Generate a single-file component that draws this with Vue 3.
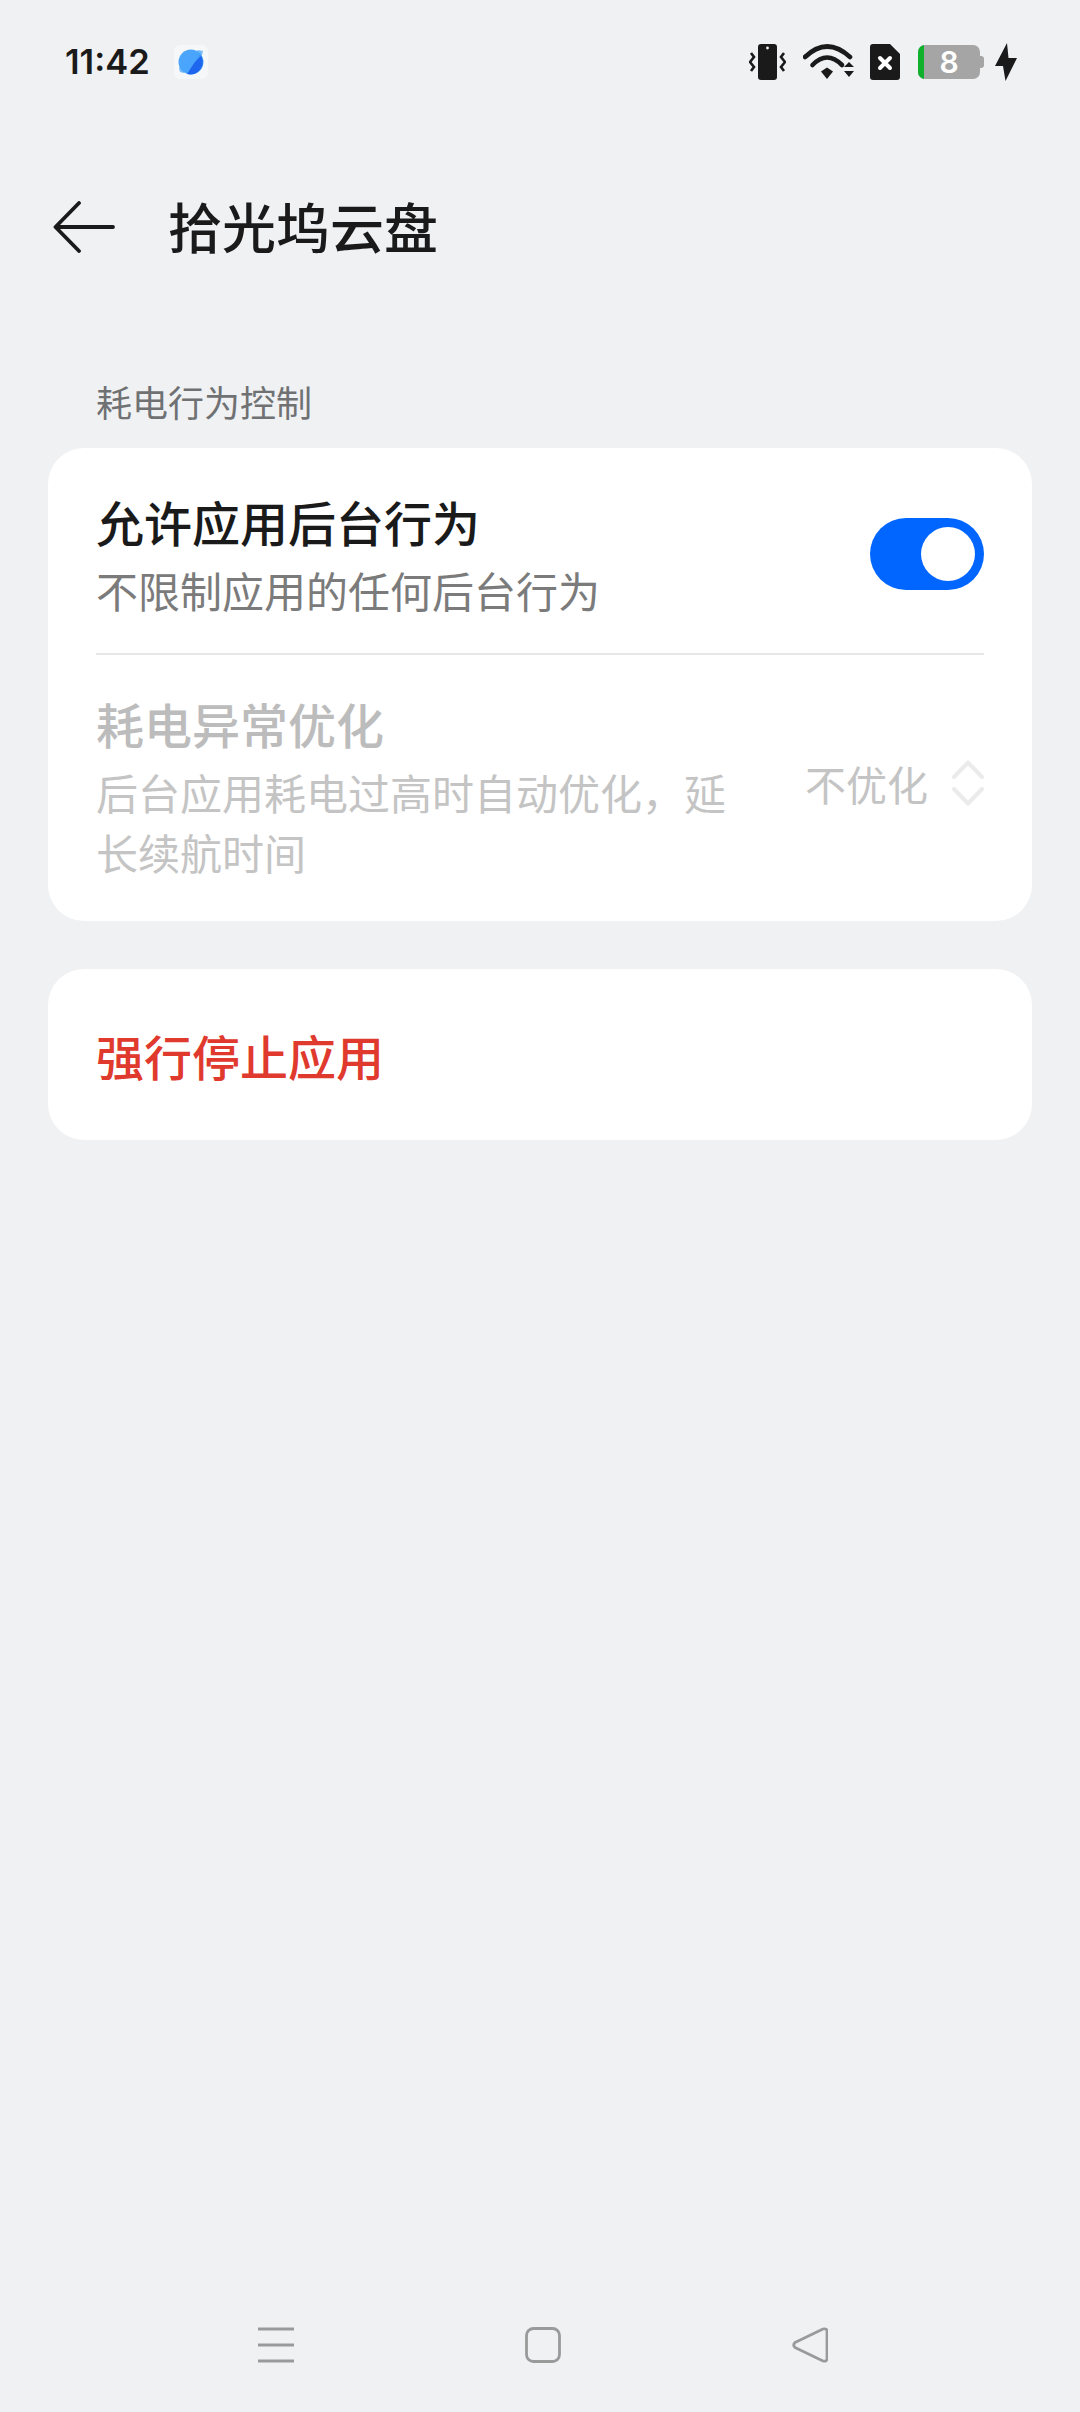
<template>
  <div class="page">
    <div class="status-bar">
      <div class="status-left">
        <span class="time">11:42</span>
        <svg class="app-icon" width="34" height="34" viewBox="0 0 34 34">
          <rect width="34" height="34" rx="6" fill="#f6f7f8" />
          <circle cx="17" cy="17" r="12.5" fill="#4aa5fb" />
          <path d="M26 9 A12.5 12.5 0 0 1 13 29 Z" fill="#1f66ee" />
          <path d="M6 27 L5 23 L24 5 L29 6 L28 10 L10 28 Z" fill="#4aa5fb" opacity="0.75" />
        </svg>
      </div>
      <div class="status-right">
        <svg width="37" height="36" viewBox="0 0 37 36">
          <rect x="9" y="0" width="19" height="36" rx="3" fill="#1a1a1a" />
          <circle cx="18.5" cy="4" r="1.4" fill="#f0f1f3" />
          <path d="M2 9 L5 13 L1 18 L5 23 L2 27" fill="none" stroke="#1a1a1a" stroke-width="2.6" />
          <path d="M35 9 L32 13 L36 18 L32 23 L35 27" fill="none" stroke="#1a1a1a" stroke-width="2.6" />
        </svg>
        <svg class="wifi" width="52" height="36" viewBox="0 0 52 36">
          <path d="M2 13 Q24 -8 47 13" fill="none" stroke="#1a1a1a" stroke-width="4.6" stroke-linecap="round" />
          <path d="M9.5 21 Q24 6 39 21" fill="none" stroke="#1a1a1a" stroke-width="4.6" stroke-linecap="round" />
          <path d="M18 27.5 L24 23.5 L30 27.5 L24 35 Z" fill="#1a1a1a" />
          <path d="M41 23 L46 18 L51 23 Z M41 27 L51 27 L46 33 Z" fill="#1a1a1a" />
        </svg>
        <svg class="sim" width="30" height="36" viewBox="0 0 30 36">
          <path d="M3 0 H20 L30 10 V33 A3 3 0 0 1 27 36 H3 A3 3 0 0 1 0 33 V3 A3 3 0 0 1 3 0 Z" fill="#1a1a1a" />
          <path d="M10 14 L20 24 M20 14 L10 24" stroke="#fff" stroke-width="4" stroke-linecap="round" />
        </svg>
        <div class="battery">
          <div class="battery-body">
            <span class="battery-level"></span>
            <span class="battery-num">8</span>
          </div>
          <span class="battery-cap"></span>
        </div>
        <svg class="bolt" width="22" height="38" viewBox="0 0 22 38">
          <path d="M12 0 L0 23 H8 L10.5 38 L22 15 H13.5 Z" fill="#1a1a1a" />
        </svg>
      </div>
    </div>

    <div class="header">
      <svg class="back" width="62" height="52" viewBox="0 0 62 52">
        <path d="M60 26 H3 M26 2 L2.5 26 L26 50" fill="none" stroke="#1a1a1a" stroke-width="3.8" stroke-linecap="round" stroke-linejoin="round" />
      </svg>
      <span class="title">拾光坞云盘</span>
    </div>

    <div class="section-title">耗电行为控制</div>

    <div class="card">
      <div class="row row-first">
        <div class="row-text">
          <div class="row-title">允许应用后台行为</div>
          <div class="row-sub">不限制应用的任何后台行为</div>
        </div>
        <div class="switch"><span class="knob"></span></div>
      </div>
      <div class="row row-disabled">
        <div class="row-text row-text-narrow">
          <div class="row-title">耗电异常优化</div>
          <div class="row-sub">后台应用耗电过高时自动优化，延长续航时间</div>
        </div>
        <div class="row-value">
          <span>不优化</span>
          <svg width="32" height="46" viewBox="0 0 32 46">
            <path d="M2 17 L16 2.5 L30 17 M2 29 L16 43.5 L30 29" fill="none" stroke="#ebebeb" stroke-width="4" stroke-linecap="round" stroke-linejoin="round" />
          </svg>
        </div>
      </div>
    </div>

    <div class="card card-stop">
      <span class="stop-text">强行停止应用</span>
    </div>

    <div class="nav-bar">
      <svg width="36" height="36" viewBox="0 0 36 36">
        <path d="M0 2 H36 M0 18 H36 M0 34 H36" stroke="#999b9b" stroke-width="3" />
      </svg>
      <svg width="36" height="36" viewBox="0 0 36 36">
        <rect x="1.5" y="1.5" width="33" height="33" rx="7" fill="none" stroke="#999b9b" stroke-width="2.8" />
      </svg>
      <svg width="36" height="36" viewBox="0 0 36 36">
        <path d="M31 2 Q35 1 35 4.5 V31.5 Q35 35 31 34 L3 20.5 Q0.5 18 3 15.5 Z" fill="none" stroke="#999b9b" stroke-width="2.8" stroke-linejoin="round" />
      </svg>
    </div>
  </div>
</template>

<script setup>
</script>

<style>
html, body {
  background: #f0f1f3;
}
</style>

<style scoped>
.page {
  display: flex;
  flex-direction: column;
  height: 2412px;
  box-sizing: border-box;
  background: #f0f1f3;
  color: #1a1a1a;
  font-family: "Noto Sans CJK SC", "Noto Sans", sans-serif;
  overflow: hidden;
}

/* 状态栏 */
.status-bar {
  display: flex;
  align-items: center;
  justify-content: space-between;
  height: 124px;
  padding: 0 63px 0 65px;
  flex-shrink: 0;
}
.status-left,
.status-right {
  display: flex;
  align-items: center;
}
.time {
  font-family: Inter, "Liberation Sans", sans-serif;
  font-size: 34.5px;
  font-weight: 600;
  line-height: 40px;
}
.app-icon {
  margin-left: 24px;
}
.wifi {
  margin-left: 17px;
}
.sim {
  margin-left: 15px;
}
.battery {
  display: flex;
  align-items: center;
  margin-left: 18px;
}
.battery-body {
  position: relative;
  width: 62px;
  height: 34px;
  border-radius: 7px;
  background: #a5a5a5;
  overflow: hidden;
  display: flex;
  align-items: center;
  justify-content: center;
}
.battery-level {
  position: absolute;
  left: 0;
  top: 0;
  bottom: 0;
  width: 6px;
  background: #0fb02b;
}
.battery-num {
  font-family: Inter, "Liberation Sans", sans-serif;
  font-size: 30px;
  font-weight: 600;
  color: #fff;
  line-height: 34px;
}
.battery-cap {
  width: 4px;
  height: 12px;
  background: #a5a5a5;
  border-radius: 0 3px 3px 0;
}
.bolt {
  margin-left: 11px;
}

/* 标题栏 */
.header {
  display: flex;
  align-items: center;
  height: 96px;
  margin-top: 54px;
  padding-left: 53px;
  flex-shrink: 0;
}
.back {
  flex-shrink: 0;
  margin-top: 2px;
}
.title {
  margin-left: 53px;
  font-size: 54px;
  font-weight: 500;
  line-height: 72px;
}

.section-title {
  margin-top: 103px;
  padding-left: 96px;
  font-size: 36px;
  line-height: 48px;
  color: #6f7173;
}

/* 卡片 */
.card {
  margin: 23px 48px 0;
  padding: 0 48px;
  background: #fff;
  border-radius: 36px;
}
.row {
  display: flex;
  align-items: center;
  justify-content: space-between;
}
.row-first {
  height: 207px;
  padding-top: 7px;
  border-bottom: 2px solid #e6e6e6;
  box-sizing: border-box;
}
.row-disabled {
  height: 266px;
  padding-bottom: 3px;
  box-sizing: border-box;
}
.row-text-narrow {
  width: 636px;
}
.row-title {
  font-size: 48px;
  line-height: 64px;
  font-weight: 500;
}
.row-sub {
  margin-top: 7px;
  font-size: 42px;
  line-height: 60px;
  color: #7b7b7b;
}
.row-disabled .row-title {
  color: #bcbcbc;
}
.row-disabled .row-sub {
  color: #c4c4c4;
}
.row-value {
  display: flex;
  align-items: center;
  gap: 24px;
  margin-bottom: 7px;
  font-size: 41px;
  color: #c4c4c4;
}
.switch {
  position: relative;
  width: 114px;
  height: 72px;
  border-radius: 36px;
  background: #0066ff;
}
.knob {
  position: absolute;
  top: 9px;
  right: 9px;
  width: 54px;
  height: 54px;
  border-radius: 50%;
  background: #fff;
}
.card-stop {
  display: flex;
  align-items: center;
  height: 171px;
  margin-top: 48px;
}
.stop-text {
  font-size: 48px;
  font-weight: 500;
  color: #e0392e;
}

/* 底部导航 */
.nav-bar {
  display: flex;
  justify-content: space-between;
  margin: auto 252px 49px 258px;
}
</style>
